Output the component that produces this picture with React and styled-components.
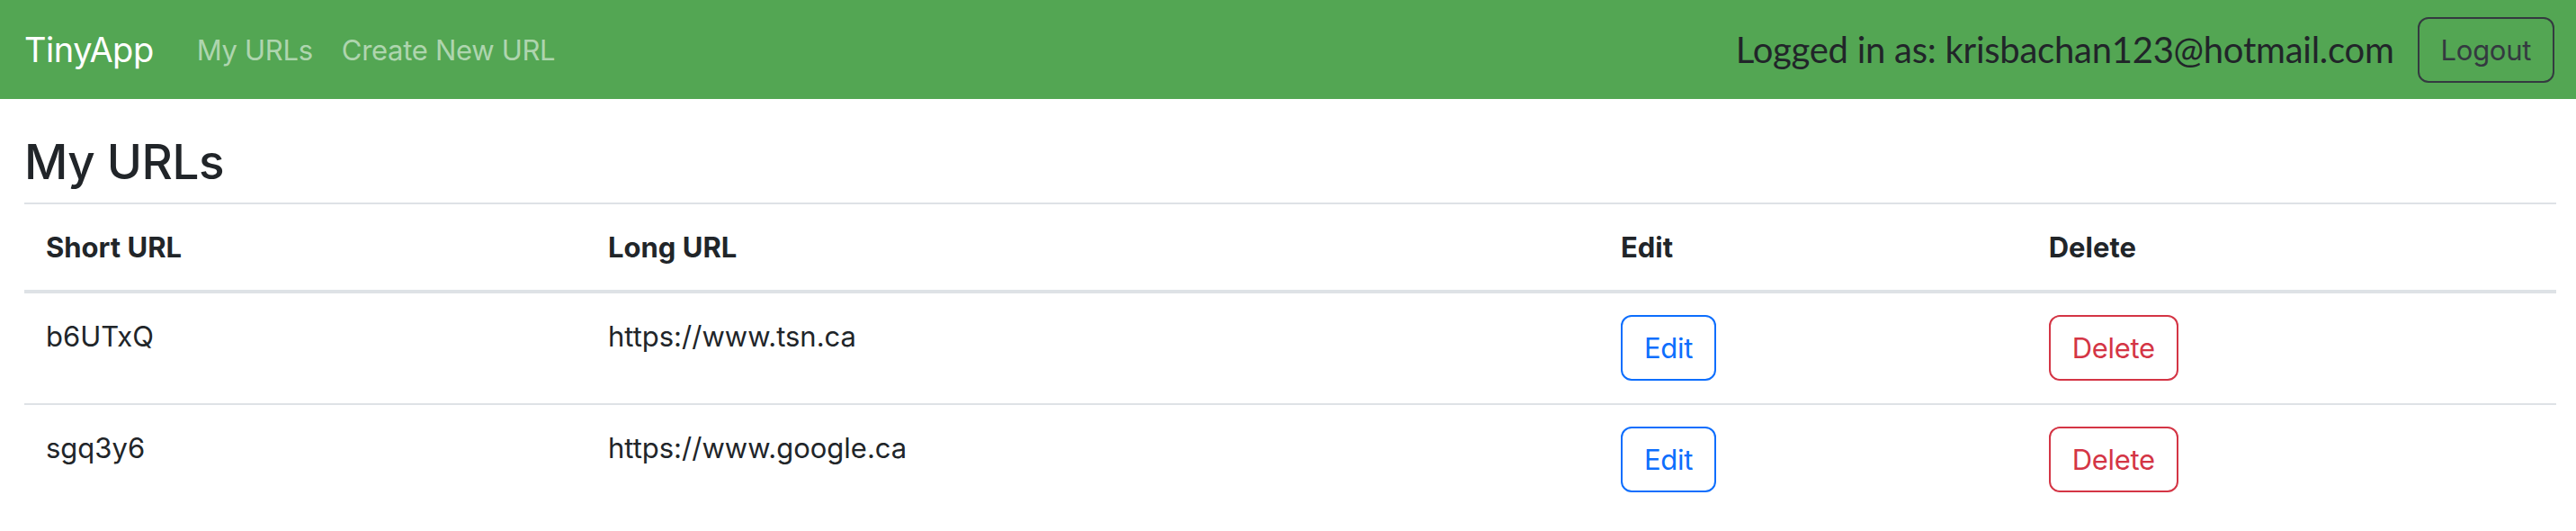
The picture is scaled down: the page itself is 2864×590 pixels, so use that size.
import React from "react";
import styled, { createGlobalStyle, css } from "styled-components";

const GlobalStyle = createGlobalStyle`
  html, body { margin: 0; padding: 0; background: #fff; }
  body {
    font-family: Inter, "Noto Sans", "Liberation Sans", sans-serif;
    color: #212529;
    -webkit-font-smoothing: antialiased;
  }
`;

const Navbar = styled.nav`
  height: 110px;
  box-sizing: border-box;
  background: #53a653;
  display: flex;
  align-items: center;
  justify-content: space-between;
  padding: 0 24px 0 27px;
`;

const NavLeft = styled.div`
  display: flex;
  align-items: center;
`;

const Brand = styled.a`
  font-size: 38px;
  color: #fff;
  text-decoration: none;
  margin-right: 32px;
  letter-spacing: -0.5px;
`;

const NavLink = styled.a`
  font-size: 31px;
  color: rgba(255, 255, 255, 0.55);
  text-decoration: none;
  padding: 0 16px;
  letter-spacing: -0.3px;
  &:first-of-type { padding-left: 0; }
`;

const NavRight = styled.div`
  display: flex;
  align-items: center;
  gap: 26px;
`;

const LoggedIn = styled.span`
  font-family: Lato, "Noto Sans", sans-serif;
  font-size: 40px;
  color: #212529;
  letter-spacing: -0.25px;
`;

const outline = (color) => css`
  color: ${color};
  border: 2px solid ${color};
`;

const Button = styled.button`
  font-family: Inter, "Noto Sans", sans-serif;
  font-size: 31px;
  line-height: 45px;
  padding: 12px 24px;
  border-radius: 12px;
  background: transparent;
  cursor: pointer;
  box-sizing: border-box;
  letter-spacing: -0.3px;
  ${({ $variant }) =>
    $variant === "primary"
      ? outline("#0d6efd")
      : $variant === "danger"
      ? outline("#d43545")
      : outline("#343a40")}
`;

const Main = styled.main`
  padding: 0 22px 0 27px;
`;

const Heading = styled.h2`
  font-size: 53px;
  font-weight: 500;
  line-height: 67px;
  margin: 37px 0 11px;
  letter-spacing: -0.5px;
`;

const Table = styled.table`
  width: 100%;
  border-collapse: collapse;
  border-top: 2px solid #dee2e6;
  font-size: 31px;
`;

const HeadRow = styled.tr`
  border-bottom: 4px solid #dee2e6;
`;

const BodyRow = styled.tr`
  border-bottom: ${({ $last }) => ($last ? "0" : "2px solid #dee2e6")};
`;

const Th = styled.th`
  text-align: left;
  font-weight: 700;
  padding: 24px;
  line-height: 47px;
  vertical-align: top;
  width: ${({ $w }) => $w};
`;

const Td = styled.td`
  padding: 24px 24px 25px;
  line-height: 47px;
  vertical-align: top;
`;

const urls = [
  { short: "b6UTxQ", long: "https://www.tsn.ca" },
  { short: "sgq3y6", long: "https://www.google.ca" },
];

export default function App() {
  return (
    <>
      <GlobalStyle />
      <Navbar>
        <NavLeft>
          <Brand href="#">TinyApp</Brand>
          <NavLink href="#">My URLs</NavLink>
          <NavLink href="#">Create New URL</NavLink>
        </NavLeft>
        <NavRight>
          <LoggedIn>Logged in as: krisbachan123@hotmail.com</LoggedIn>
          <Button>Logout</Button>
        </NavRight>
      </Navbar>
      <Main>
        <Heading>My URLs</Heading>
        <Table>
          <thead>
            <HeadRow>
              <Th $w="22.2%">Short URL</Th>
              <Th $w="40%">Long URL</Th>
              <Th $w="16.9%">Edit</Th>
              <Th $w="20.9%">Delete</Th>
            </HeadRow>
          </thead>
          <tbody>
            {urls.map((u, i) => (
              <BodyRow key={u.short} $last={i === urls.length - 1}>
                <Td>{u.short}</Td>
                <Td>{u.long}</Td>
                <Td>
                  <Button $variant="primary">Edit</Button>
                </Td>
                <Td>
                  <Button $variant="danger">Delete</Button>
                </Td>
              </BodyRow>
            ))}
          </tbody>
        </Table>
      </Main>
    </>
  );
}
